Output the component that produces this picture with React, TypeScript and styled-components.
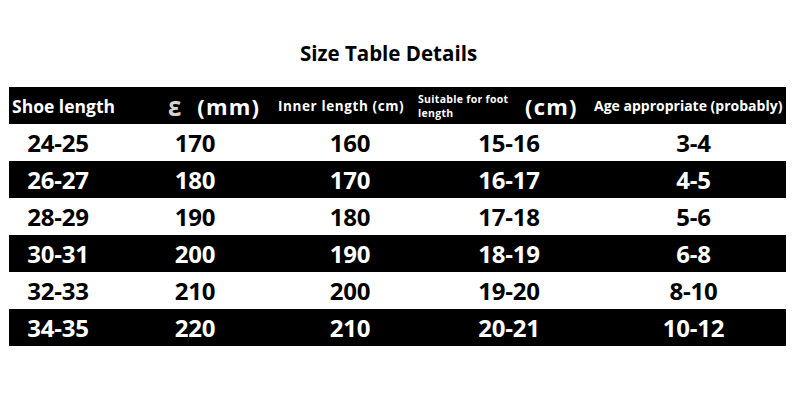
import { createGlobalStyle } from "styled-components";
import styled from "styled-components";

const GlobalStyle = createGlobalStyle`
  html, body {
    margin: 0;
    padding: 0;
    background: #ffffff;
  }
  body {
    font-family: "Open Sans", "Liberation Sans", sans-serif;
    width: 800px;
    height: 400px;
    overflow: hidden;
  }
`;

const Page = styled.div`
  width: 800px;
  height: 400px;
  padding: 36px 14px 0 9px;
  box-sizing: border-box;
  display: flex;
  flex-direction: column;
`;

const Title = styled.h1`
  margin: 0 0 17px 0;
  padding-right: 18px;
  height: 34px;
  line-height: 34px;
  text-align: center;
  font-size: 20.5px;
  font-weight: 700;
  color: #000;
`;

const Table = styled.div`
  display: flex;
  flex-direction: column;
`;

const Head = styled.div`
  display: flex;
  align-items: center;
  height: 37px;
  background: #000;
  color: #fff;
  font-weight: 700;
`;

const HeadCell = styled.div<{ $w: number; $pad?: number; $size?: number; $ls?: number }>`
  width: ${(p) => p.$w}px;
  padding-left: ${(p) => p.$pad ?? 0}px;
  box-sizing: border-box;
  font-size: ${(p) => p.$size ?? 14}px;
  letter-spacing: ${(p) => p.$ls ?? 0}px;
  white-space: nowrap;
  display: flex;
  align-items: center;
`;

const Glyph = styled.span`
  display: inline-block;
  font-size: 24px;
  line-height: 1;
  color: #d4d4d4;
  margin-right: 16px;
  font-weight: 700;
  transform: scaleY(1.15);
`;

const Wide = styled.span`
  letter-spacing: 1.2px;
`;

const TwoLine = styled.div`
  font-size: 10.5px;
  line-height: 14px;
  letter-spacing: 0.3px;
  white-space: normal;
  width: 96px;
`;

const Row = styled.div<{ $dark: boolean }>`
  display: grid;
  grid-template-columns: 98px 176px 134px 184px 185px;
  height: 37px;
  align-items: center;
  background: ${(p) => (p.$dark ? "#000" : "#fff")};
  color: ${(p) => (p.$dark ? "#fff" : "#000")};
`;

const Cell = styled.div`
  text-align: center;
  font-size: 24px;
  font-weight: 700;
  letter-spacing: -0.2px;
  line-height: 37px;
`;

const rows = [
  ["24-25", "170", "160", "15-16", "3-4"],
  ["26-27", "180", "170", "16-17", "4-5"],
  ["28-29", "190", "180", "17-18", "5-6"],
  ["30-31", "200", "190", "18-19", "6-8"],
  ["32-33", "210", "200", "19-20", "8-10"],
  ["34-35", "220", "210", "20-21", "10-12"],
];

export default function App() {
  return (
    <>
      <GlobalStyle />
      <Page>
        <Title>Size Table Details</Title>
        <Table>
          <Head>
            <HeadCell $w={156} $pad={3} $size={17.5}>
              Shoe length
            </HeadCell>
            <HeadCell $w={106} $pad={3} $size={22}>
              <Glyph>ε</Glyph>
              <Wide>(mm)</Wide>
            </HeadCell>
            <HeadCell $w={147} $pad={7} $size={13.5} $ls={0.6}>
              Inner length (cm)
            </HeadCell>
            <HeadCell $w={107} $pad={0}>
              <TwoLine>Suitable for foot length</TwoLine>
            </HeadCell>
            <HeadCell $w={69} $pad={0} $size={22}>
              <Wide>(cm)</Wide>
            </HeadCell>
            <HeadCell $w={192} $pad={0} $size={14}>
              Age appropriate (probably)
            </HeadCell>
          </Head>
          {rows.map((r, i) => (
            <Row key={r[0]} $dark={i % 2 === 1}>
              {r.map((v, j) => (
                <Cell key={j}>{v}</Cell>
              ))}
            </Row>
          ))}
        </Table>
      </Page>
    </>
  );
}
